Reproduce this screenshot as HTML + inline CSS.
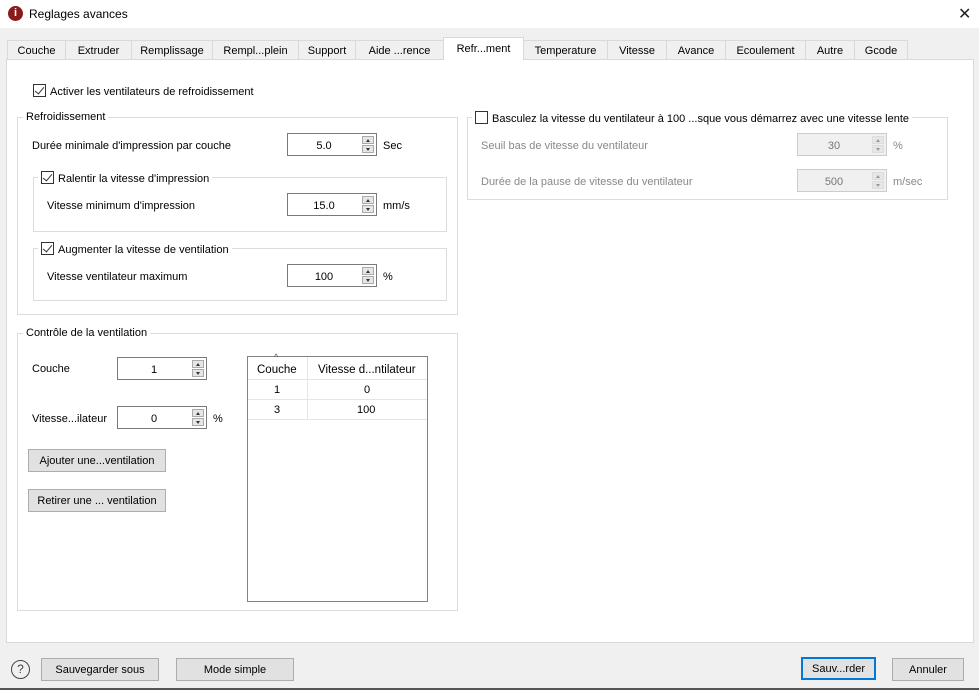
<!DOCTYPE html>
<html><head><meta charset="utf-8"><style>
*{box-sizing:border-box;margin:0;padding:0}
body{width:979px;height:690px;background:#f0f0f0;font-family:"Liberation Sans",sans-serif;font-size:11px;color:#000;position:relative;overflow:hidden}
.a{position:absolute;white-space:nowrap}
.title{left:0;top:0;width:979px;height:28px;background:#fff}
.tab{position:absolute;top:40px;height:19px;border:1px solid #d9d9d9;border-bottom:none;background:#f0f0f0;text-align:center;line-height:20px;font-size:11px}
.tab.sel{top:37px;height:23px;background:#fff;border-color:#d9d9d9;z-index:2;line-height:22px}
.panel{position:absolute;left:6px;top:59px;width:968px;height:584px;background:#fff;border:1px solid #d9d9d9}
.grp{position:absolute;border:1px solid #dcdcdc}
.gt{position:absolute;background:#fff;padding:0 3px;white-space:nowrap;font-size:11px}
.cb{display:inline-block;width:13px;height:13px;border:1px solid #333;vertical-align:-2px;margin-right:4px;background:#fff;position:relative}
.cb.k::after{content:"";position:absolute;left:3px;top:0px;width:4px;height:8px;border:solid #333;border-width:0 1.3px 1.3px 0;transform:rotate(40deg)}
.sp{position:absolute;width:90px;height:23px;border:1px solid #7a7a7a;background:#fff;text-align:center;line-height:24px;padding-right:16px}
.sp.d{border-color:#ccc;background:#f0f0f0;color:#777}
.sp i{position:absolute;right:2px;width:12px;height:8px;background:#e6e6e6;border:1px solid #aaa}
.sp.d i{border-color:#ddd}
.sp i.u{top:2px}.sp i.w{top:11px}
.sp i.u::after,.sp i.w::after{content:"";position:absolute;left:3px;border-left:2.5px solid transparent;border-right:2.5px solid transparent}
.sp i.u::after{top:2px;border-bottom:3px solid #333}
.sp i.w::after{top:2px;border-top:3px solid #333}
.sp.d i.u::after{border-bottom-color:#999}.sp.d i.w::after{border-top-color:#999}
.btn{position:absolute;height:23px;border:1px solid #adadad;background:#e1e1e1;text-align:center;line-height:23px;font-size:11px}
.dis{color:#888}
</style></head><body>
<div class="a title"></div>
<div class="a" style="left:8px;top:6px;width:15px;height:15px;border-radius:50%;background:#8b1a1a;color:#fff;font-weight:bold;font-size:11px;text-align:center;line-height:15px">i</div>
<div class="a" style="left:29px;top:7px;font-size:12px">Reglages avances</div>
<div class="a" style="left:958px;top:4px;font-size:16px;font-family:'DejaVu Sans',sans-serif;font-weight:normal;color:#222">&#x2715;</div>

<div class="tab" style="left:7px;width:59px">Couche</div>
<div class="tab" style="left:65px;width:67px">Extruder</div>
<div class="tab" style="left:131px;width:82px">Remplissage</div>
<div class="tab" style="left:212px;width:87px">Rempl...plein</div>
<div class="tab" style="left:298px;width:58px">Support</div>
<div class="tab" style="left:355px;width:89px">Aide ...rence</div>
<div class="tab sel" style="left:443px;width:81px">Refr...ment</div>
<div class="tab" style="left:523px;width:85px">Temperature</div>
<div class="tab" style="left:607px;width:60px">Vitesse</div>
<div class="tab" style="left:666px;width:60px">Avance</div>
<div class="tab" style="left:725px;width:81px">Ecoulement</div>
<div class="tab" style="left:805px;width:50px">Autre</div>
<div class="tab" style="left:854px;width:54px">Gcode</div>
<div class="panel"></div>

<div class="a" style="left:33px;top:84px"><span class="cb k"></span>Activer les ventilateurs de refroidissement</div>

<div class="grp" style="left:17px;top:117px;width:441px;height:198px"></div>
<div class="gt" style="left:23px;top:111px">Refroidissement</div>
<div class="a" style="left:32px;top:140px">Durée minimale d'impression par couche</div>
<div class="sp" style="left:287px;top:133px">5.0<i class="u"></i><i class="w"></i></div>
<div class="a" style="left:383px;top:140px">Sec</div>

<div class="grp" style="left:33px;top:177px;width:414px;height:55px"></div>
<div class="gt" style="left:38px;top:171px"><span class="cb k"></span>Ralentir la vitesse d'impression</div>
<div class="a" style="left:47px;top:200px">Vitesse minimum d'impression</div>
<div class="sp" style="left:287px;top:193px">15.0<i class="u"></i><i class="w"></i></div>
<div class="a" style="left:383px;top:200px">mm/s</div>

<div class="grp" style="left:33px;top:248px;width:414px;height:53px"></div>
<div class="gt" style="left:38px;top:242px"><span class="cb k"></span>Augmenter la vitesse de ventilation</div>
<div class="a" style="left:47px;top:271px">Vitesse ventilateur maximum</div>
<div class="sp" style="left:287px;top:264px">100<i class="u"></i><i class="w"></i></div>
<div class="a" style="left:383px;top:271px">%</div>

<div class="grp" style="left:467px;top:117px;width:481px;height:83px"></div>
<div class="gt" style="left:472px;top:111px"><span class="cb"></span>Basculez la vitesse du ventilateur à 100 ...sque vous démarrez avec une vitesse lente</div>
<div class="a dis" style="left:481px;top:140px">Seuil bas de vitesse du ventilateur</div>
<div class="sp d" style="left:797px;top:133px">30<i class="u"></i><i class="w"></i></div>
<div class="a dis" style="left:893px;top:140px">%</div>
<div class="a dis" style="left:481px;top:176px">Durée de la pause de vitesse du ventilateur</div>
<div class="sp d" style="left:797px;top:169px">500<i class="u"></i><i class="w"></i></div>
<div class="a dis" style="left:893px;top:176px">m/sec</div>

<div class="grp" style="left:17px;top:333px;width:441px;height:278px"></div>
<div class="gt" style="left:23px;top:327px">Contrôle de la ventilation</div>
<div class="a" style="left:32px;top:363px">Couche</div>
<div class="sp" style="left:117px;top:357px">1<i class="u"></i><i class="w"></i></div>
<div class="a" style="left:32px;top:413px">Vitesse...ilateur</div>
<div class="sp" style="left:117px;top:406px">0<i class="u"></i><i class="w"></i></div>
<div class="a" style="left:213px;top:413px">%</div>
<div class="btn" style="left:28px;top:449px;width:138px">Ajouter une...ventilation</div>
<div class="btn" style="left:28px;top:489px;width:138px">Retirer une ... ventilation</div>

<div class="a" style="left:247px;top:356px;width:181px;height:246px;border:1px solid #828282;background:#fff"></div>
<div class="a" style="left:248px;top:357px;width:179px;height:23px;border-bottom:1px solid #e5e5e5"></div>
<div class="a" style="left:307px;top:357px;width:1px;height:62px;background:#e5e5e5"></div>
<div class="a" style="left:248px;top:399px;width:179px;height:1px;background:#e5e5e5"></div>
<div class="a" style="left:248px;top:419px;width:179px;height:1px;background:#e5e5e5"></div>
<div class="a" style="left:274px;top:352px;font-size:9px;color:#555">^</div>
<div class="a" style="left:257px;top:364px;font-size:11.5px">Couche</div>
<div class="a" style="left:318px;top:364px;font-size:11.5px">Vitesse d...ntilateur</div>
<div class="a" style="left:274px;top:384px">1</div>
<div class="a" style="left:364px;top:384px">0</div>
<div class="a" style="left:274px;top:404px">3</div>
<div class="a" style="left:357px;top:404px">100</div>

<div class="a" style="left:11px;top:660px;width:19px;height:19px;border:1.3px solid #444;border-radius:50%;text-align:center;line-height:17px;font-size:12px;color:#444">?</div>
<div class="btn" style="left:41px;top:658px;width:118px">Sauvegarder sous</div>
<div class="btn" style="left:176px;top:658px;width:118px">Mode simple</div>
<div class="btn" style="left:801px;top:657px;width:75px;border:2px solid #0078d7;line-height:21px">Sauv...rder</div>
<div class="btn" style="left:892px;top:658px;width:72px">Annuler</div>
<div class="a" style="left:0;top:688px;width:979px;height:2px;background:#555"></div>
</body></html>
